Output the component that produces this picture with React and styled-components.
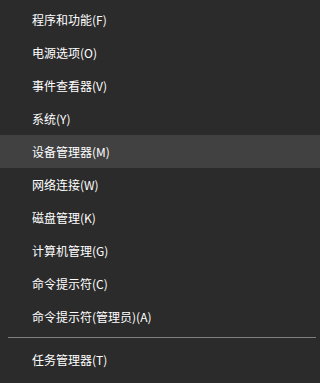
import React from "react";
import styled, { createGlobalStyle } from "styled-components";

const GlobalStyle = createGlobalStyle`
  html, body {
    margin: 0;
    padding: 0;
    background: #2b2b2b;
  }
`;

const items = [
  "程序和功能(F)",
  "电源选项(O)",
  "事件查看器(V)",
  "系统(Y)",
  "设备管理器(M)",
  "网络连接(W)",
  "磁盘管理(K)",
  "计算机管理(G)",
  "命令提示符(C)",
  "命令提示符(管理员)(A)",
];

const App = () => {
  return (
    <>
      <GlobalStyle />
      <Menu>
        {items.map((label, i) => (
          <Item key={label} $active={i === 4}>
            {label}
          </Item>
        ))}
        <Separator />
        <Item>任务管理器(T)</Item>
      </Menu>
    </>
  );
};

const Menu = styled.div`
  display: flex;
  flex-direction: column;
  width: 100%;
  min-height: 383px;
  box-sizing: border-box;
  padding-top: 3px;
  background: #2b2b2b;
  font-family: "Microsoft YaHei", "Noto Sans CJK SC", "Noto Sans", sans-serif;
  font-size: 12px;
  color: #ffffff;
`;

const Item = styled.div`
  display: flex;
  align-items: center;
  height: 33px;
  padding-left: 32px;
  background: ${(p) => (p.$active ? "#414141" : "transparent")};
  white-space: nowrap;
`;

const Separator = styled.div`
  height: 1px;
  margin: 4px 4px 5px 8px;
  background: #7f7f7f;
`;

export default App;
